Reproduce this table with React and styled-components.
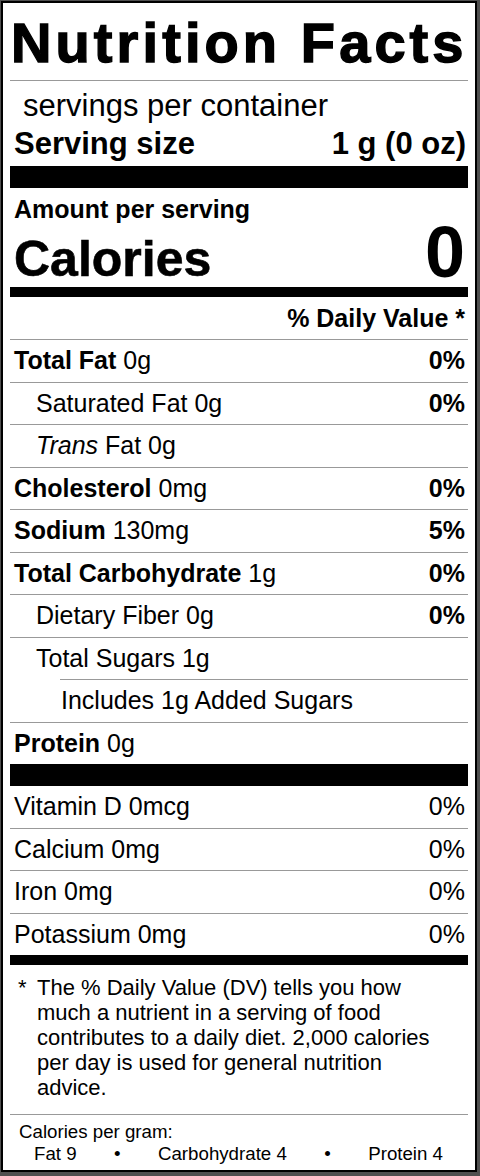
import React from 'react';
import styled, { createGlobalStyle } from 'styled-components';

const GlobalStyle = createGlobalStyle`
  html, body {
    margin: 0;
    padding: 0;
    background: #4f4f4f;
  }
  body {
    font-family: "Liberation Sans", Arial, sans-serif;
    color: #000;
  }
  * { box-sizing: border-box; }
`;

const Label = styled.div`
  margin: 1px 3px 4px 1px;
  border: 2px solid #000;
  background: #fff;
  padding: 0 7px;
  display: flex;
  flex-direction: column;
`;

const Title = styled.h1`
  margin: 0;
  padding: 2px 0 0 1px;
  font-size: 56px;
  line-height: 75px;
  font-weight: 700;
  letter-spacing: 4.1px;
  white-space: nowrap;
  -webkit-text-stroke: 1.4px #000;
  border-bottom: 1px solid #999;
`;

const Servings = styled.div`
  padding: 6px 2px 3px 4px;
  font-size: 31px;
  line-height: 38px;
`;

const ServingsCount = styled.div`
  padding-left: 9px;
`;

const SpreadRow = styled.div`
  display: flex;
  justify-content: space-between;
  align-items: baseline;
  font-weight: ${p => (p.$bold ? 700 : 400)};
`;

const Bar = styled.div`
  height: ${p => p.$h}px;
  background: #000;
  flex-shrink: 0;
`;

const Amount = styled.div`
  padding: 6px 3px 0 4px;
  font-size: 25px;
  line-height: 30px;
  font-weight: 700;
`;

const CaloriesRow = styled.div`
  display: flex;
  justify-content: space-between;
  align-items: flex-end;
  height: 63px;
  padding: 0 3px 6px 4px;
  font-weight: 700;
`;

const CaloriesWord = styled.span`
  font-size: 50px;
  line-height: 44px;
  -webkit-text-stroke: 0.6px #000;
`;

const CaloriesValue = styled.span`
  font-size: 72px;
  line-height: 58px;
`;

const DvHeader = styled.div`
  padding: 6px 3px 6px 4px;
  text-align: right;
  font-size: 25px;
  line-height: 30px;
  font-weight: 700;
`;

const Row = styled.div`
  display: flex;
  justify-content: space-between;
  align-items: baseline;
  margin-left: ${p => p.$inset || 0}px;
  padding: 0 3px 1.5px ${p => 4 + (p.$indent || 0)}px;
  border-top: ${p => (p.$noLine ? 'none' : '1px solid #999')};
  font-size: 25px;
  line-height: 40px;
`;

const Strong = styled.b`
  font-weight: 700;
`;

const Pct = styled.span`
  font-weight: ${p => (p.$bold ? 700 : 400)};
`;

const Footnote = styled.div`
  display: flex;
  padding: 10px 23px 14px 8px;
  font-size: 22px;
  line-height: 25px;
`;

const Star = styled.span`
  width: 19px;
  flex-shrink: 0;
`;

const Bottom = styled.div`
  border-top: 1px solid #999;
  padding: 6px 0 5px;
  font-size: 18.7px;
  line-height: 22px;
`;

const PerGram = styled.div`
  padding-left: 9px;
`;

const GramRow = styled.div`
  display: flex;
  justify-content: space-between;
  padding: 0 25px 0 24px;
`;

const nutrients = [
  { name: 'Total Fat', amount: '0g', dv: '0%', bold: true },
  { name: 'Saturated Fat', amount: '0g', dv: '0%', indent: 22 },
  { name: 'Trans', amount: 'Fat 0g', indent: 22, italic: true },
  { name: 'Cholesterol', amount: '0mg', dv: '0%', bold: true },
  { name: 'Sodium', amount: '130mg', dv: '5%', bold: true },
  { name: 'Total Carbohydrate', amount: '1g', dv: '0%', bold: true },
  { name: 'Dietary Fiber', amount: '0g', dv: '0%', indent: 22 },
  { name: 'Total Sugars', amount: '1g', indent: 22 },
  { name: 'Includes 1g Added Sugars', amount: '', inset: 50, indent: -3 },
  { name: 'Protein', amount: '0g', bold: true },
];

const vitamins = [
  { name: 'Vitamin D', amount: '0mcg', dv: '0%' },
  { name: 'Calcium', amount: '0mg', dv: '0%' },
  { name: 'Iron', amount: '0mg', dv: '0%' },
  { name: 'Potassium', amount: '0mg', dv: '0%' },
];

const NameCell = ({ n }) => {
  if (n.bold) return <span><Strong>{n.name}</Strong> {n.amount}</span>;
  if (n.italic) return <span><i>{n.name}</i> {n.amount}</span>;
  return <span>{n.name}{n.amount ? ' ' + n.amount : ''}</span>;
};

export default function App() {
  return (
    <>
      <GlobalStyle />
      <Label>
        <Title>Nutrition Facts</Title>
        <Servings>
          <ServingsCount>servings per container</ServingsCount>
          <SpreadRow $bold>
            <span>Serving size</span>
            <span>1 g (0 oz)</span>
          </SpreadRow>
        </Servings>
        <Bar $h={22} />
        <Amount>Amount per serving</Amount>
        <CaloriesRow>
          <CaloriesWord>Calories</CaloriesWord>
          <CaloriesValue>0</CaloriesValue>
        </CaloriesRow>
        <Bar $h={10} />
        <DvHeader>% Daily Value *</DvHeader>
        {nutrients.map(n => (
          <Row key={n.name} $indent={n.indent} $inset={n.inset}>
            <NameCell n={n} />
            {n.dv && <Pct $bold>{n.dv}</Pct>}
          </Row>
        ))}
        <Bar $h={22} />
        {vitamins.map((v, i) => (
          <Row key={v.name} $noLine={i === 0}>
            <NameCell n={v} />
            <Pct>{v.dv}</Pct>
          </Row>
        ))}
        <Bar $h={10} />
        <Footnote>
          <Star>*</Star>
          <span>
            The % Daily Value (DV) tells you how much a nutrient in a serving of food
            contributes to a daily diet. 2,000 calories per day is used for general
            nutrition advice.
          </span>
        </Footnote>
        <Bottom>
          <PerGram>Calories per gram:</PerGram>
          <GramRow>
            <span>Fat 9</span>
            <span>•</span>
            <span>Carbohydrate 4</span>
            <span>•</span>
            <span>Protein 4</span>
          </GramRow>
        </Bottom>
      </Label>
    </>
  );
}
